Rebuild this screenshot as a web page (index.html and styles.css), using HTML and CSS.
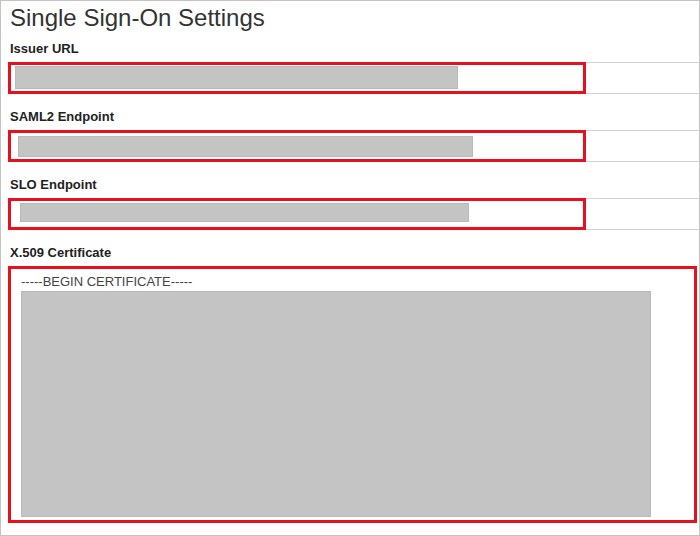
FILE: index.html
```html
<!DOCTYPE html>
<html lang="en">
<head>
<meta charset="utf-8">
<title>Single Sign-On Settings</title>
<link rel="stylesheet" href="styles.css">
</head>
<body>
<div class="panel">
  <h1 class="title">Single Sign-On Settings</h1>

  <div class="field">
    <div class="label">Issuer URL</div>
    <div class="input-row">
      <div class="highlight">
        <div class="redact redact-1"></div>
      </div>
    </div>
  </div>

  <div class="field">
    <div class="label">SAML2 Endpoint</div>
    <div class="input-row">
      <div class="highlight">
        <div class="redact redact-2"></div>
      </div>
    </div>
  </div>

  <div class="field">
    <div class="label">SLO Endpoint</div>
    <div class="input-row">
      <div class="highlight">
        <div class="redact redact-3"></div>
      </div>
    </div>
  </div>

  <div class="field">
    <div class="label">X.509 Certificate</div>
    <div class="cert">
      <div class="cert-text">-----BEGIN CERTIFICATE-----</div>
      <div class="cert-redact"></div>
    </div>
  </div>
</div>
</body>
</html>
```

FILE: styles.css
```css
html, body {
  margin: 0;
  padding: 0;
  background: #ffffff;
}

body {
  font-family: "Liberation Sans", Arial, sans-serif;
  color: #222;
}

.panel {
  width: 700px;
  height: 536px;
  box-sizing: border-box;
  border: 1px solid #c4c4c4;
  padding: 3px 0 0 7px;
  display: flex;
  flex-direction: column;
}

.title {
  margin: 0;
  padding-left: 2px;
  font-size: 24px;
  line-height: 28px;
  font-weight: normal;
  color: #333;
}

.field {
  display: flex;
  flex-direction: column;
}

.field + .field {
  margin-top: 14px;
}

.title + .field {
  margin-top: 8px;
}

.label {
  padding: 1px 0 0 2px;
  font-size: 13px;
  line-height: 16px;
  font-weight: bold;
  color: #222;
  margin-bottom: 5px;
}

.input-row {
  height: 32px;
  box-sizing: border-box;
  border-top: 1px solid #d2d2d2;
  border-bottom: 1px solid #d2d2d2;
  display: flex;
  align-items: flex-start;
}

.highlight {
  width: 578px;
  height: 32px;
  margin-top: -1px;
  box-sizing: border-box;
  border: 3px solid #e8101e;
  display: flex;
  align-items: flex-start;
}

.redact {
  background: #c4c4c4;
  box-shadow: inset 0 0 0 1px #bababa;
}

.redact-1 {
  margin: 1px 0 0 4px;
  width: 443px;
  height: 23px;
}

.redact-2 {
  margin: 3px 0 0 7px;
  width: 455px;
  height: 21px;
}

.redact-3 {
  margin: 2px 0 0 9px;
  width: 449px;
  height: 19px;
}

.cert {
  margin-right: 2px;
  height: 257px;
  box-sizing: border-box;
  border: 3px solid #e8101e;
  padding: 5px 0 0 10px;
  display: flex;
  flex-direction: column;
}

.cert-text {
  font-size: 13px;
  line-height: 15px;
  color: #444;
}

.cert-redact {
  margin-top: 2px;
  width: 630px;
  height: 226px;
  background: #c4c4c4;
  box-shadow: inset 0 0 0 1px #bababa;
}
```
